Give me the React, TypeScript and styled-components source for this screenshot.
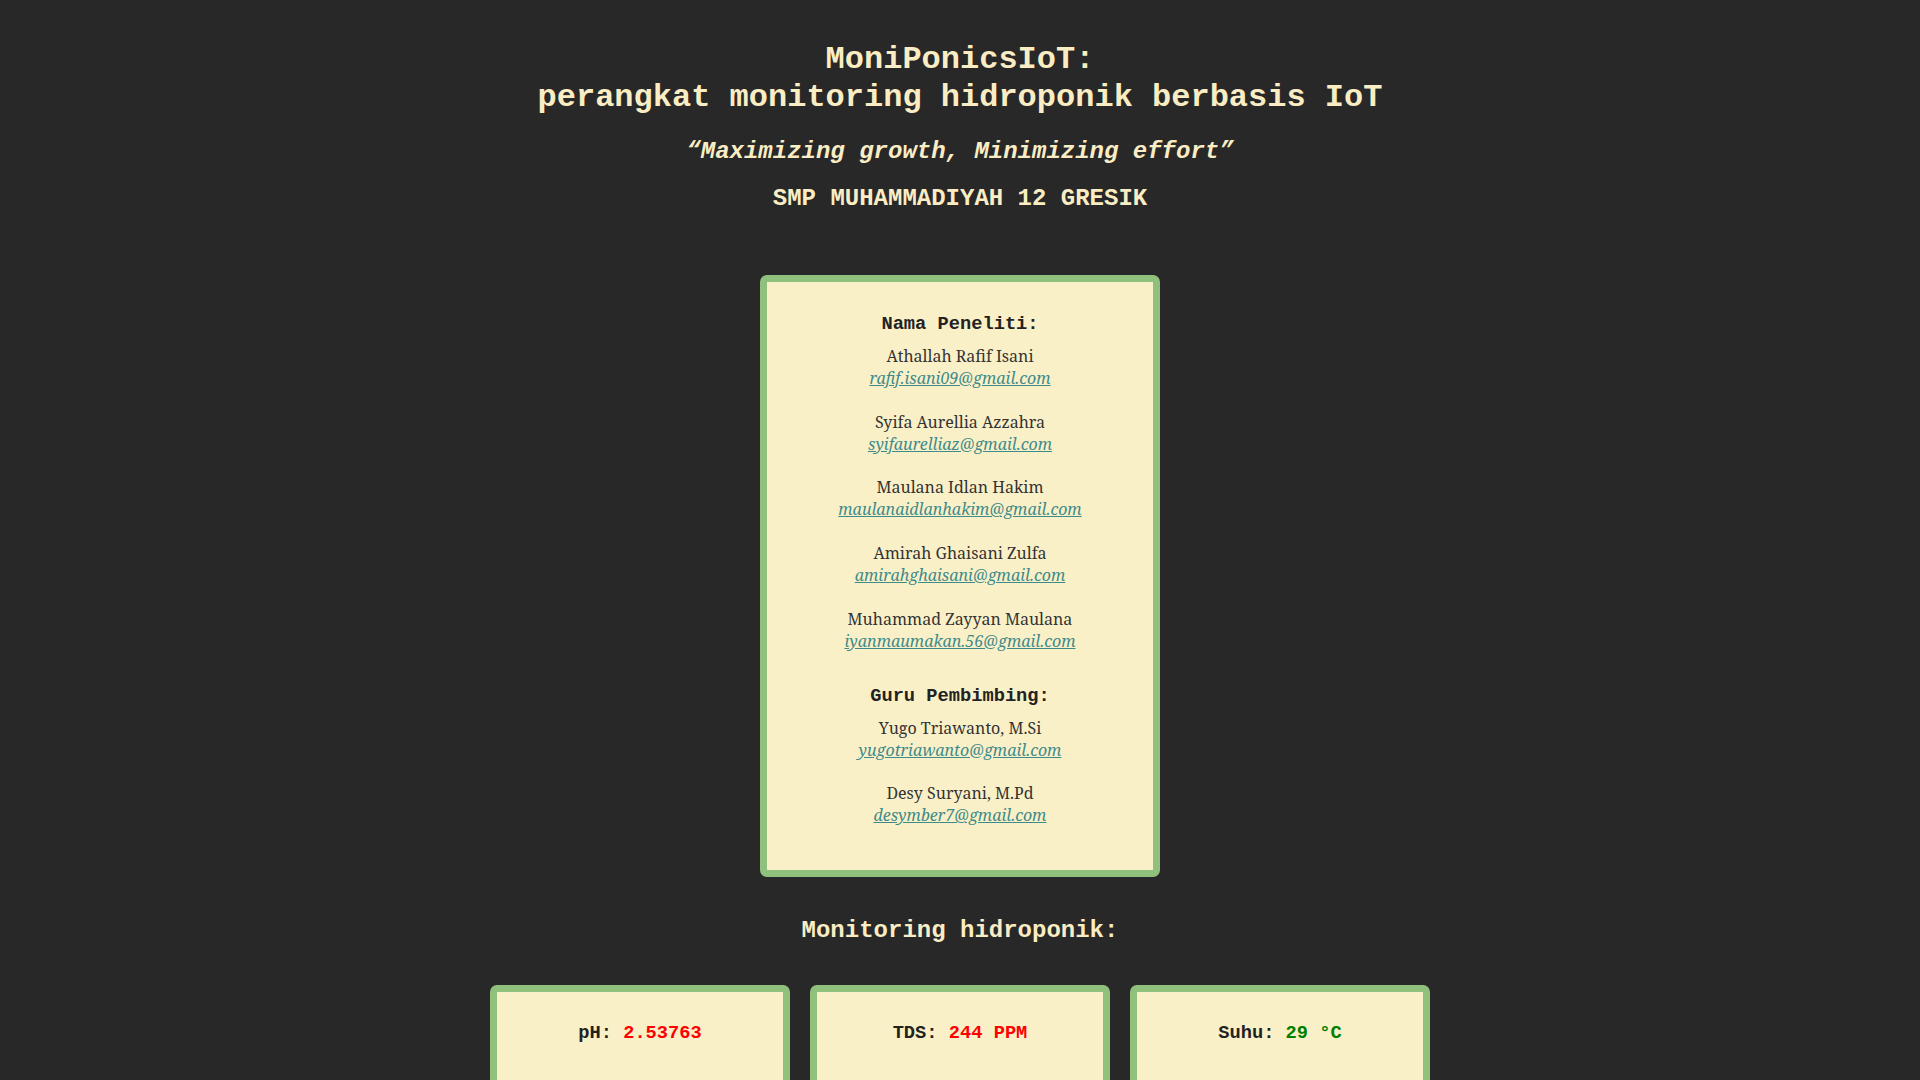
import React from "react";
import styled, { createGlobalStyle } from "styled-components";

const GlobalStyle = createGlobalStyle`
  html, body {
    margin: 0;
    padding: 0;
    background: #282828;
  }
  body {
    font-family: "Noto Serif", "DejaVu Serif", serif;
  }
`;

const Page = styled.main`
  display: flex;
  flex-direction: column;
  align-items: center;
  padding-top: 41px;
  padding-bottom: 60px;
  color: #faedc4;
`;

const Title = styled.h1`
  margin: 0;
  font-family: "Liberation Mono", "Courier New", monospace;
  font-weight: bold;
  font-size: 32px;
  line-height: 38px;
  text-align: center;
  color: #faedc4;
`;

const Tagline = styled.h2`
  margin: 21px 0 0;
  font-family: "Liberation Mono", "Courier New", monospace;
  font-style: italic;
  font-weight: bold;
  font-size: 24px;
  line-height: 27px;
  text-align: center;
`;

const School = styled.h2`
  margin: 20px 0 0;
  font-family: "Liberation Mono", "Courier New", monospace;
  font-weight: bold;
  font-size: 24px;
  line-height: 27px;
  text-align: center;
`;

const Card = styled.section`
  box-sizing: border-box;
  width: 400px;
  margin-top: 63px;
  padding: 10px 10px 43px;
  background: #faf0c7;
  border: 7px solid #8fc17d;
  border-radius: 7px;
  display: flex;
  flex-direction: column;
  align-items: center;
  text-align: center;
`;

const CardHeading = styled.h3<{ $first?: boolean }>`
  margin: ${(p) => (p.$first ? "22px" : "33px")} 0 11px;
  font-family: "Liberation Mono", "Courier New", monospace;
  font-weight: bold;
  font-size: 18.72px;
  line-height: 21px;
  color: #222222;
`;

const PersonList = styled.div`
  display: flex;
  flex-direction: column;
  gap: 21.9px;
`;

const Person = styled.div`
  display: flex;
  flex-direction: column;
  font-family: "Noto Serif", "DejaVu Serif", serif;
  font-size: 16px;
  line-height: 21.9px;
  color: #333333;
`;

const Email = styled.a`
  font-style: italic;
  color: #3f8b8b;
  text-decoration: underline;
`;

const SectionTitle = styled.h2`
  margin: 40px 0 0;
  font-family: "Liberation Mono", "Courier New", monospace;
  font-weight: bold;
  font-size: 24px;
  line-height: 27px;
  text-align: center;
`;

const SensorRow = styled.div`
  display: grid;
  grid-template-columns: repeat(3, 300px);
  gap: 20px;
  margin-top: 41px;
`;

const SensorCard = styled.div`
  box-sizing: border-box;
  height: 200px;
  padding: 31px 10px 10px;
  background: #faf0c7;
  border: 7px solid #8fc17d;
  border-radius: 7px;
  text-align: center;
`;

const SensorText = styled.h3`
  margin: 0;
  font-family: "Liberation Mono", "Courier New", monospace;
  font-weight: bold;
  font-size: 18.72px;
  line-height: 21px;
  color: #222222;
`;

const Value = styled.span<{ $tone: "bad" | "good" }>`
  color: ${(p) => (p.$tone === "bad" ? "#ff0000" : "#008000")};
`;

const researchers = [
  { name: "Athallah Rafif Isani", email: "rafif.isani09@gmail.com" },
  { name: "Syifa Aurellia Azzahra", email: "syifaurelliaz@gmail.com" },
  { name: "Maulana Idlan Hakim", email: "maulanaidlanhakim@gmail.com" },
  { name: "Amirah Ghaisani Zulfa", email: "amirahghaisani@gmail.com" },
  { name: "Muhammad Zayyan Maulana", email: "iyanmaumakan.56@gmail.com" },
];

const mentors = [
  { name: "Yugo Triawanto, M.Si", email: "yugotriawanto@gmail.com" },
  { name: "Desy Suryani, M.Pd", email: "desymber7@gmail.com" },
];

const People = ({ list }: { list: { name: string; email: string }[] }) => (
  <PersonList>
    {list.map((p) => (
      <Person key={p.email}>
        <span>{p.name}</span>
        <span>
          <Email href={`mailto:${p.email}`}>{p.email}</Email>
        </span>
      </Person>
    ))}
  </PersonList>
);

export default function App() {
  return (
    <>
      <GlobalStyle />
      <Page>
        <Title>
          MoniPonicsIoT:
          <br />
          perangkat monitoring hidroponik berbasis IoT
        </Title>
        <Tagline>“Maximizing growth, Minimizing effort”</Tagline>
        <School>SMP MUHAMMADIYAH 12 GRESIK</School>

        <Card>
          <CardHeading $first>Nama Peneliti:</CardHeading>
          <People list={researchers} />
          <CardHeading>Guru Pembimbing:</CardHeading>
          <People list={mentors} />
        </Card>

        <SectionTitle>Monitoring hidroponik:</SectionTitle>
        <SensorRow>
          <SensorCard>
            <SensorText>
              pH: <Value $tone="bad">2.53763</Value>
            </SensorText>
          </SensorCard>
          <SensorCard>
            <SensorText>
              TDS: <Value $tone="bad">244 PPM</Value>
            </SensorText>
          </SensorCard>
          <SensorCard>
            <SensorText>
              Suhu: <Value $tone="good">29 °C</Value>
            </SensorText>
          </SensorCard>
        </SensorRow>
      </Page>
    </>
  );
}
